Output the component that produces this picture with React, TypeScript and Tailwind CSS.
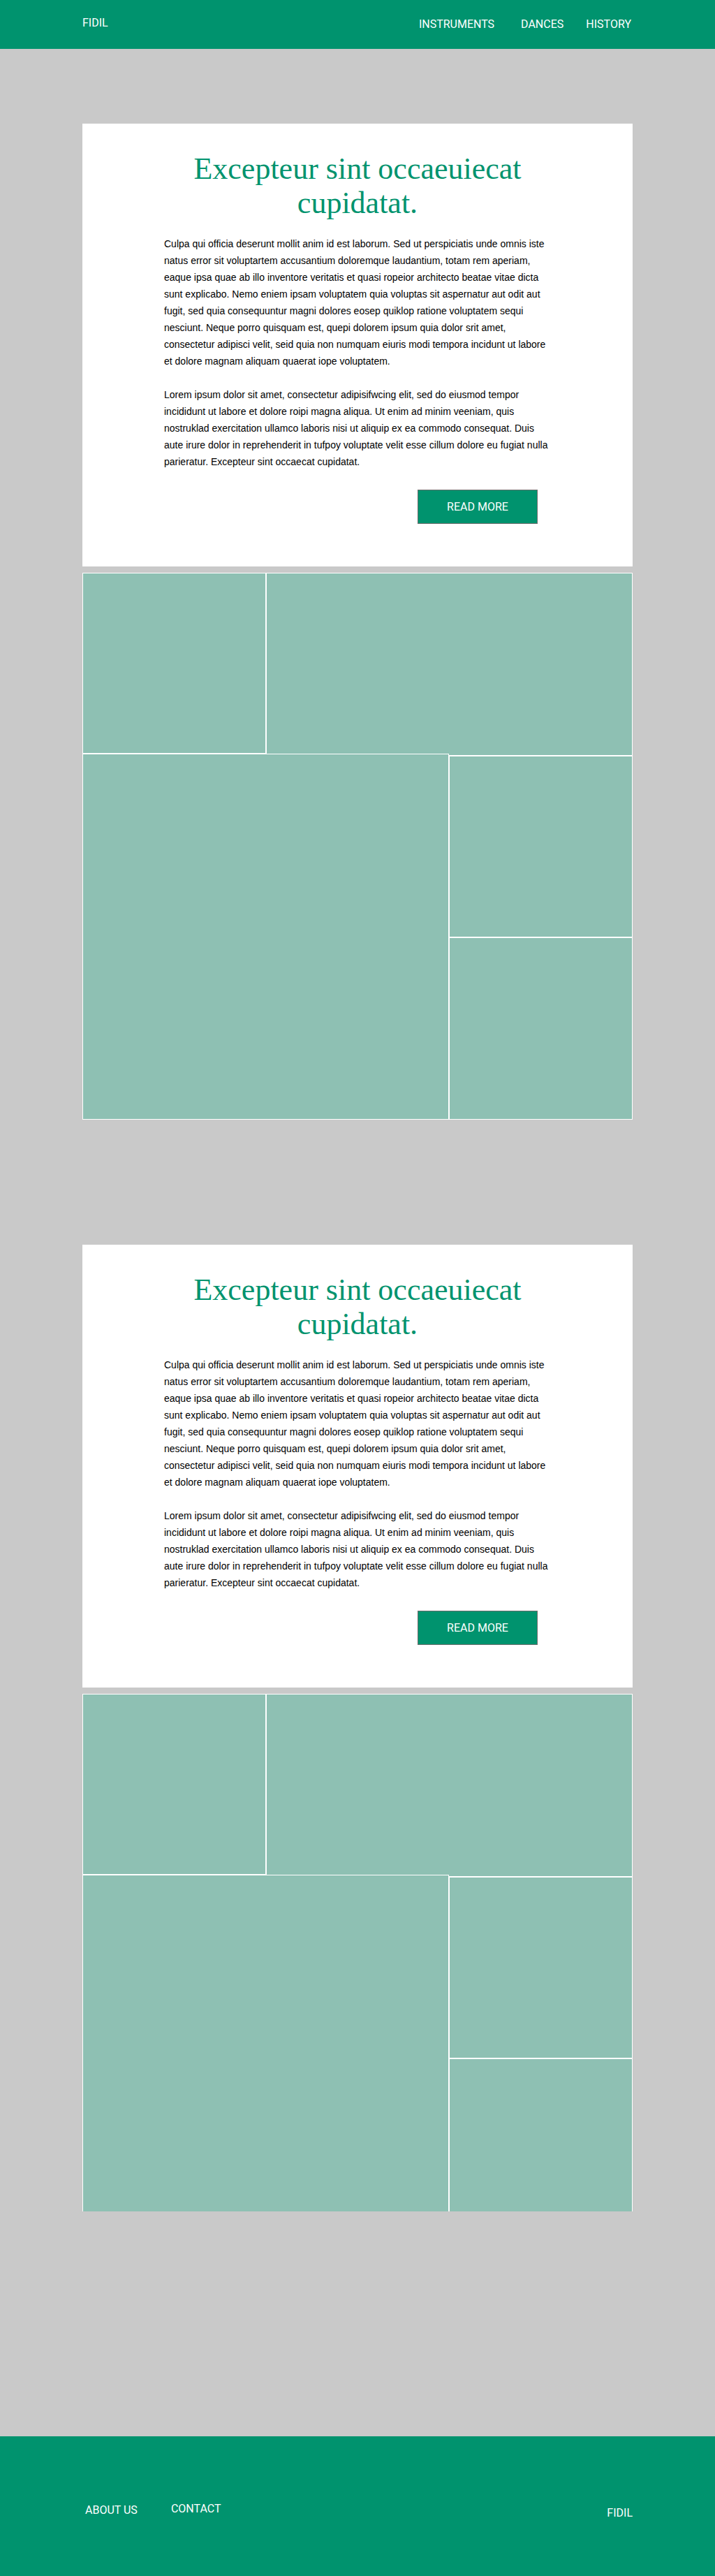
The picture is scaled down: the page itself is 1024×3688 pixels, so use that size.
import React from "react";

const para1 = [
  "Culpa qui officia deserunt mollit anim id est laborum. Sed ut perspiciatis unde omnis iste",
  "natus error sit voluptartem accusantium doloremque laudantium, totam rem aperiam,",
  "eaque ipsa quae ab illo inventore veritatis et quasi ropeior architecto beatae vitae dicta",
  "sunt explicabo. Nemo eniem ipsam voluptatem quia voluptas sit aspernatur aut odit aut",
  "fugit, sed quia consequuntur magni dolores eosep quiklop ratione voluptatem sequi",
  "nesciunt. Neque porro quisquam est, quepi dolorem ipsum quia dolor srit amet,",
  "consectetur adipisci velit, seid quia non numquam eiuris modi tempora incidunt ut labore",
  "et dolore magnam aliquam quaerat iope voluptatem.",
];

const para2 = [
  "Lorem ipsum dolor sit amet, consectetur adipisifwcing elit, sed do eiusmod tempor",
  "incididunt ut labore et dolore roipi magna aliqua. Ut enim ad minim veeniam, quis",
  "nostruklad exercitation ullamco laboris nisi ut aliquip ex ea commodo consequat. Duis",
  "aute irure dolor in reprehenderit in tufpoy voluptate velit esse cillum dolore eu fugiat nulla",
  "parieratur. Excepteur sint occaecat cupidatat.",
];

function Lines({ lines }: { lines: string[] }) {
  return (
    <>
      {lines.map((l, i) => (
        <React.Fragment key={i}>
          {l}
          {i < lines.length - 1 && <br />}
        </React.Fragment>
      ))}
    </>
  );
}

function Card() {
  return (
    <div className="bg-white w-[788px] h-[634px] pt-[40px] px-[117px]">
      <h1 className="text-center text-[#00936e] text-[44px] leading-[49px] font-normal font-['Liberation_Serif',serif]">
        Excepteur sint occaeuiecat
        <br />
        cupidatat.
      </h1>
      <div className="mt-[22px] text-[14px] leading-[24px] text-black font-['Liberation_Sans',Arial,sans-serif] whitespace-nowrap">
        <p>
          <Lines lines={para1} />
        </p>
        <p className="mt-[24px]">
          <Lines lines={para2} />
        </p>
      </div>
      <button className="mt-[28px] ml-[363px] w-[172px] h-[49px] bg-[#00936e] border border-[#6b6b6b] text-white text-[16px] font-['Roboto',sans-serif] flex items-center justify-center">
        READ MORE
      </button>
    </div>
  );
}

function Tiles({ clip }: { clip?: boolean }) {
  return (
    <div className={clip ? "w-[788px] h-[741px] overflow-hidden" : "w-[788px] h-[783px]"}>
      <div className="grid grid-cols-[263px_262px_263px] grid-rows-[259px_3px_260px_261px] w-[788px]">
        <div className="col-start-1 col-end-2 row-start-1 row-end-2 bg-[#8ec0b3] border border-white" />
        <div className="col-start-2 col-end-4 row-start-1 row-end-3 bg-[#8ec0b3] border border-white" />
        <div className="col-start-1 col-end-3 row-start-2 row-end-5 bg-[#8ec0b3] border border-white" />
        <div className="col-start-3 col-end-4 row-start-3 row-end-4 bg-[#8ec0b3] border border-white" />
        <div className="col-start-3 col-end-4 row-start-4 row-end-5 bg-[#8ec0b3] border border-white" />
      </div>
    </div>
  );
}

export default function App() {
  return (
    <div className="w-[1024px] bg-[#c9c9c9] font-['Roboto',sans-serif]">
      <header className="h-[70px] bg-[#00936e] text-white text-[16px]">
        <div className="w-[788px] mx-auto flex justify-between">
          <div className="pt-[23px] leading-[19px]">FIDIL</div>
          <nav className="pt-[25px] leading-[19px] flex mr-[2px]">
            <a className="mr-[38px]">INSTRUMENTS</a>
            <a className="mr-[32px]">DANCES</a>
            <a>HISTORY</a>
          </nav>
        </div>
      </header>

      <main className="w-[788px] mx-auto">
        <section className="pt-[107px]">
          <Card />
          <div className="mt-[9px]">
            <Tiles />
          </div>
        </section>
        <section className="pt-[179px] pb-[322px]">
          <Card />
          <div className="mt-[9px]">
            <Tiles clip />
          </div>
        </section>
      </main>

      <footer className="h-[200px] bg-[#00936e] text-white text-[16px] leading-[19px]">
        <div className="w-[788px] mx-auto flex items-start">
          <a className="mt-[96px] ml-[4px]">ABOUT US</a>
          <a className="mt-[94px] ml-[48px]">CONTACT</a>
          <a className="mt-[100px] ml-auto">FIDIL</a>
        </div>
      </footer>
    </div>
  );
}
